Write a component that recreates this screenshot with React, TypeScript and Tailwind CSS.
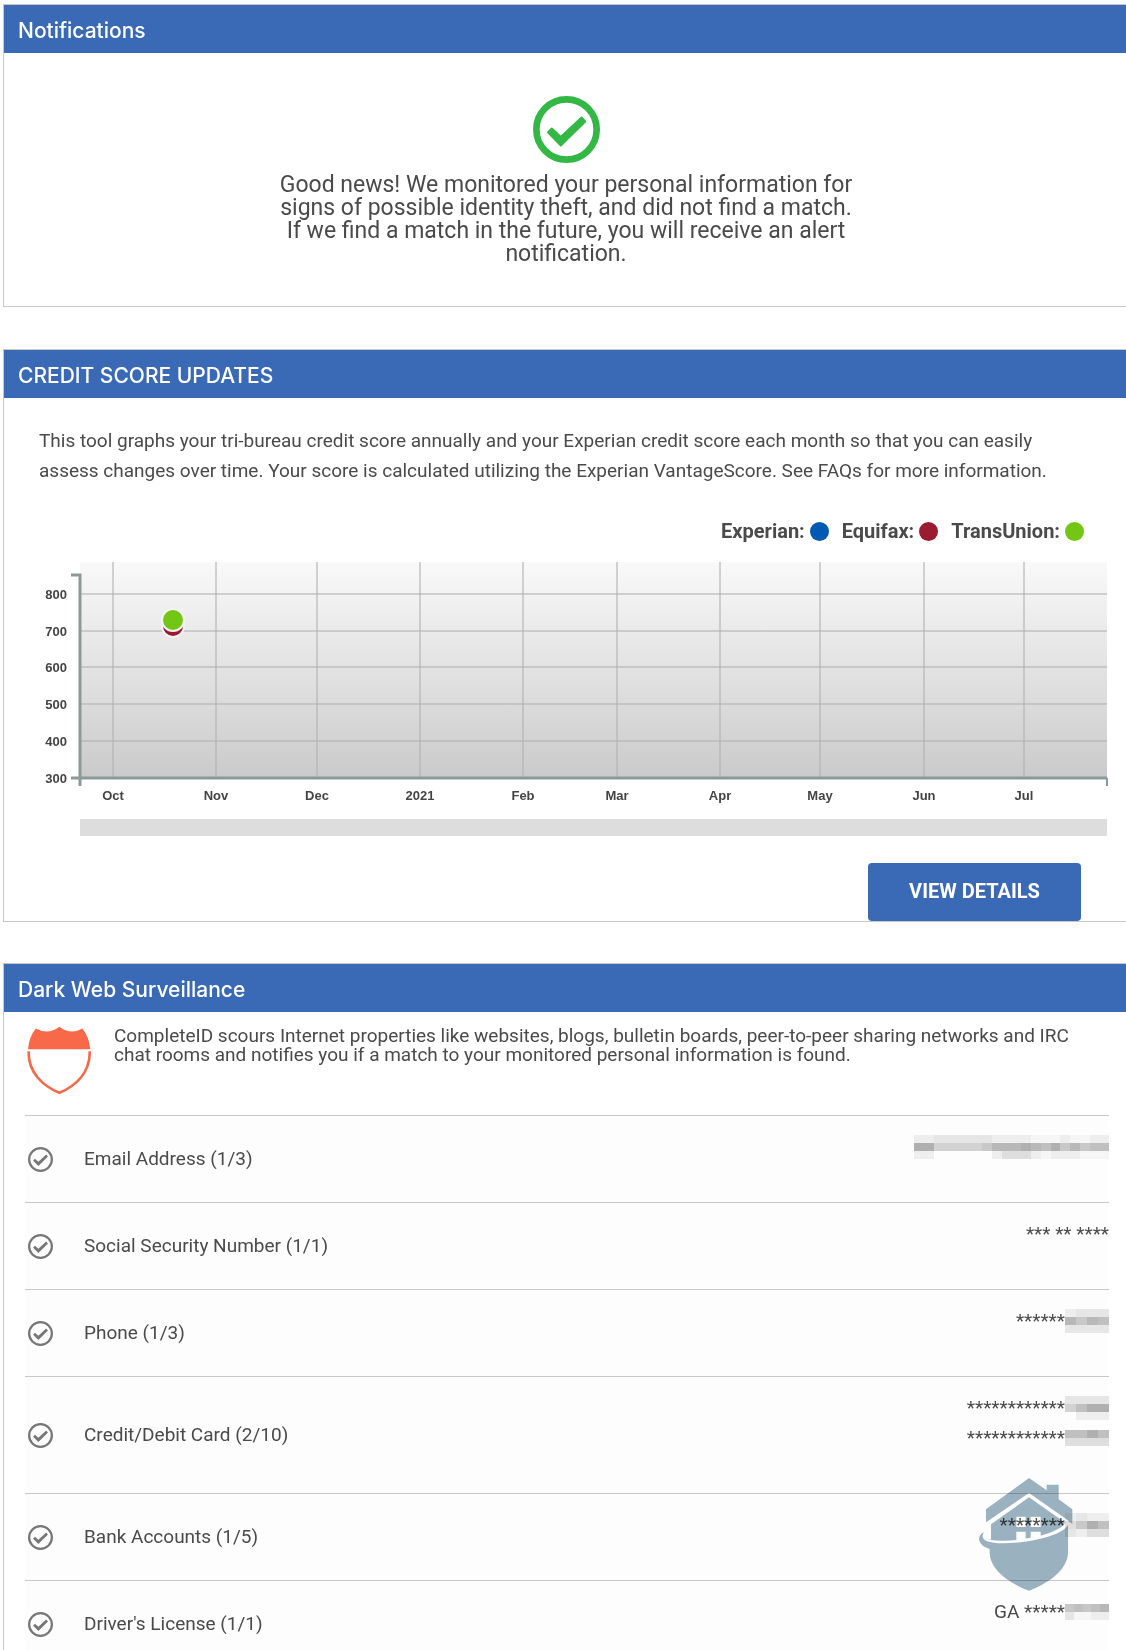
import type { ReactNode } from "react";

const months = [
  { label: "Oct", x: 113 },
  { label: "Nov", x: 216 },
  { label: "Dec", x: 317 },
  { label: "2021", x: 420 },
  { label: "Feb", x: 523 },
  { label: "Mar", x: 617 },
  { label: "Apr", x: 720 },
  { label: "May", x: 820 },
  { label: "Jun", x: 924 },
  { label: "Jul", x: 1024 },
];

const scores = [
  { label: "800", y: 34 },
  { label: "700", y: 71 },
  { label: "600", y: 107 },
  { label: "500", y: 144 },
  { label: "400", y: 181 },
  { label: "300", y: 218 },
];

const bureaus = [
  { name: "Experian:", dot: "bg-[#0059b3]" },
  { name: "Equifax:", dot: "bg-[#9b1b30]" },
  { name: "TransUnion:", dot: "bg-[#74c614]" },
];

/* Each digit is a shade of grey for one block, from 0 (none) to 9 (darkest). */
const shades = ["none", "#f6f6f6", "#eeeeee", "#e6e6e6", "#dedede", "#d2d2d2", "#c8c8c8", "#c0c0c0", "#b8b8b8", "#b0b0b0"];

function Redacted({ rows }: { rows: string[] }) {
  const cols = rows[0].length;
  return (
    <svg
      role="img"
      aria-label="Hidden"
      viewBox={`0 0 ${cols * 10} ${rows.length * 8}`}
      preserveAspectRatio="none"
      height={rows.length * 8}
      className={`shrink-0 ${cols > 5 ? "w-[195px]" : "w-11"}`}
      shapeRendering="crispEdges"
    >
      {rows.map((row, r) =>
        row.split("").map((c, i) => (
          <rect key={`${r}-${i}`} x={i * 10} y={r * 8} width="10" height="8" fill={shades[Number(c)]} />
        ))
      )}
    </svg>
  );
}

const items: { label: string; values: { text: string; mask?: string[] }[]; logo?: boolean }[] = [
  {
    label: "Email Address (1/3)",
    values: [{ text: "", mask: ["22333333222211121122", "99555556888987968677", "22000000244421222111"] }],
  },
  { label: "Social Security Number (1/1)", values: [{ text: "*** ** ****" }] },
  { label: "Phone (1/3)", values: [{ text: "******", mask: ["2333", "8687", "3333"] }] },
  {
    label: "Credit/Debit Card (2/10)",
    values: [
      { text: "************", mask: ["3333", "5799", "0222"] },
      { text: "************", mask: ["7797", "4444"] },
    ],
  },
  { label: "Bank Accounts (1/5)", values: [{ text: "********", mask: ["2322", "4697", "3244"] }], logo: true },
  { label: "Driver's License (1/1)", values: [{ text: "GA *****", mask: ["67678", "31122"] }] },
];

function Panel({ title, children, className }: { title: string; children: ReactNode; className: string }) {
  return (
    <section className={`ml-[3px] border-y border-l border-[#c8c8c8] ${className}`}>
      <h2 className="flex h-12 items-center bg-[#3a69b6] px-3.5 pt-1 font-['Inter'] text-[21px] leading-6 font-medium text-white">
        {title}
      </h2>
      {children}
    </section>
  );
}

function CheckCircle({ className, ring }: { className: string; ring: number }) {
  return (
    <svg viewBox="0 0 200 200" className={className} aria-hidden="true">
      <circle cx="100" cy="100" r={100 - ring / 2} fill="none" stroke="currentColor" strokeWidth={ring} />
      <path d="M43 106 54 95Q56 93 58 95L83 118 143 62Q145 60 147 62L158 74Q160 76 158 78L85 150Q83 152 81 150L43 111Q41 108 43 106Z" fill="currentColor" />
    </svg>
  );
}

function RoadShield() {
  return (
    <svg viewBox="80 226 194 208" className="h-[69px] w-16 shrink-0" aria-hidden="true">
      <path d="M107 233Q144 254 178 228Q213 254 248 233Q268 258 272 296H83Q86 258 107 233Z" fill="#f8694a" />
      <path d="M85 302C83 368 130 408 178 428C226 408 272 368 270 302" fill="none" stroke="#f8694a" strokeWidth="8" />
    </svg>
  );
}

function HouseBadge() {
  return (
    <svg viewBox="117 55 282 339" className="absolute -top-4 right-9 z-10 h-[113px] w-[94px] mix-blend-multiply" aria-hidden="true">
      <path d="M138 149 267 55 320 92V75H356V119L397 149V192L384 184V278C384 330 325 372 267 393C209 372 149 330 149 278V268C128 262 117 250 117 236Q120 222 132 218L138 192Z" fill="#9bb3c1" />
      <path d="M136 189 267 100 386 183 380 192 267 113 153 194V240C136 238 126 230 132 216L128 196Z" fill="#fff" />
      <path d="M132 217C120 236 132 251 190 251C275 251 388 222 386 187L376 188C362 220 260 242 190 243C150 244 126 238 132 217Z" fill="#fff" />
      <path d="M229 171H257V202H229ZM272 171H302V202H272ZM229 216H257V243H229ZM272 216H302V234L272 242Z" fill="#fff" />
    </svg>
  );
}

function ScoreChart() {
  return (
    <svg viewBox="39 0 1070 278" className="block w-full" role="img" aria-label="Credit scores by month">
      <defs>
        <linearGradient id="plot" x1="0" y1="0" x2="0" y2="1">
          <stop offset="0" stopColor="#f9f9f9" />
          <stop offset="0.3" stopColor="#ebebeb" />
          <stop offset="0.6" stopColor="#dedede" />
          <stop offset="1" stopColor="#cacaca" />
        </linearGradient>
      </defs>
      <rect x="80" y="2" width="1027" height="216" fill="url(#plot)" />
      <g stroke="#b0b0b0" strokeOpacity="0.55" strokeWidth="2">
        {months.map((m) => (
          <line key={m.label} x1={m.x} x2={m.x} y1="2" y2="218" />
        ))}
        {scores.map((s) => (
          <line key={s.label} x1="80" x2="1107" y1={s.y} y2={s.y} />
        ))}
      </g>
      <path d="M71 15H80V226M71 218H1107" fill="none" stroke="#8b9997" strokeWidth="3" />
      <path d="M1107 218V226" stroke="#8b9997" strokeWidth="2" />
      <rect x="80" y="259" width="1027" height="17" fill="#dddddd" />
      <g fill="#444" fontFamily="Liberation Sans, Arial, sans-serif" fontSize="13" fontWeight="700">
        {scores.map((s) => (
          <text key={s.label} x="67" y={s.y + 5} textAnchor="end">{s.label}</text>
        ))}
        {months.map((m) => (
          <text key={m.label} x={m.x} y="240" textAnchor="middle">{m.label}</text>
        ))}
      </g>
      <g stroke="#f4f4f4" strokeWidth="2">
        <circle cx="173" cy="66" r="11" fill="#9b1b30" />
        <circle cx="173" cy="60" r="11" fill="#74c614" />
      </g>
    </svg>
  );
}

export default function App() {
  return (
    <main className="overflow-hidden bg-white pt-1 font-['Roboto',sans-serif] text-[#4a4a4a]">
      <Panel title="Notifications" className="mb-[42px]">
        <div className="flex flex-col items-center pt-[43px] pb-[41px] pl-0.5">
          <CheckCircle className="size-[67px] text-[#33b846]" ring={20} />
          <p className="mt-2.5 text-center text-[23px] leading-[23px]">
            Good news! We monitored your personal information for
            <br />
            signs of possible identity theft, and did not find a match.
            <br />
            If we find a match in the future, you will receive an alert
            <br />
            notification.
          </p>
        </div>
      </Panel>

      <Panel title="CREDIT SCORE UPDATES" className="mb-[41px]">
        <div className="pt-7 pr-[17px] pl-[35px]">
          <p className="pr-8 text-[19px] leading-[30px]">
            This tool graphs your tri-bureau credit score annually and your Experian credit score each month so that you can easily
            assess changes over time. Your score is calculated utilizing the Experian VantageScore. See FAQs for more information.
          </p>
          <ul className="mt-[30px] mb-3.5 flex justify-end gap-[13px] pr-[25px] text-[20px] leading-[30px] font-bold">
            {bureaus.map((b) => (
              <li key={b.name} className="flex items-center gap-[5px]">
                {b.name}
                <span className={`size-[19px] rounded-full ${b.dot}`} />
              </li>
            ))}
          </ul>
          <ScoreChart />
          <div className="mt-[25px] flex justify-end pr-7">
            <button type="button" className="h-[58px] w-[213px] rounded bg-[#3a69b6] pb-0.5 text-[20px] font-bold text-white">
              VIEW DETAILS
            </button>
          </div>
        </div>
      </Panel>

      <Panel title="Dark Web Surveillance" className="">
        <div className="pr-[17px] pl-[21px]">
          <div className="flex items-start gap-[23px] pt-3.5 pb-5 pl-0.5">
            <RoadShield />
            <p className="text-[19px] leading-[19px]">
              CompleteID scours Internet properties like websites, blogs, bulletin boards, peer-to-peer sharing networks and IRC
              <br />
              chat rooms and notifies you if a match to your monitored personal information is found.
            </p>
          </div>
          <ul>
            {items.map((item) => (
              <li key={item.label} className="relative flex items-center border-t border-[#c8c8c8] bg-[#fdfdfd] pl-[3px] text-[19px] leading-[30px]">
                <CheckCircle className="size-[25px] shrink-0 text-[#777]" ring={18} />
                <span className="ml-[31px] grow">{item.label}</span>
                <div className="flex flex-col items-end pt-4 pb-10">
                  {item.values.map((v, i) => (
                    <div key={i} className="flex h-[30px] items-center">
                      <span>{v.text}</span>
                      {v.mask && <Redacted rows={v.mask} />}
                    </div>
                  ))}
                </div>
                {item.logo && <HouseBadge />}
              </li>
            ))}
          </ul>
        </div>
      </Panel>
    </main>
  );
}
